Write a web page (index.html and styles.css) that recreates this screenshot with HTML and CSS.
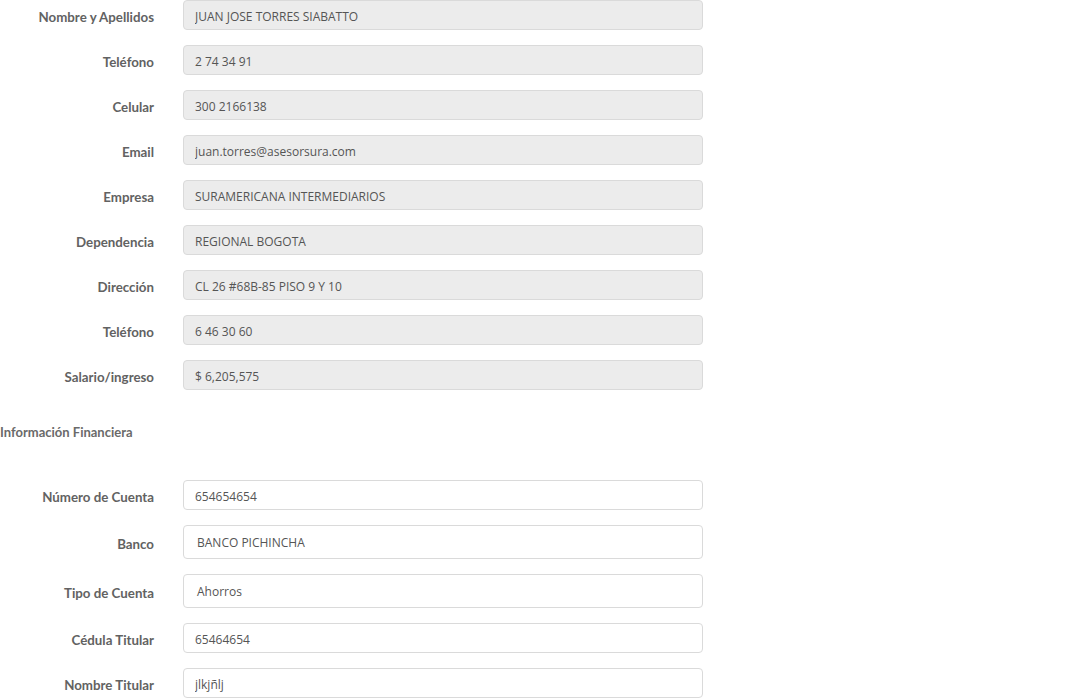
FILE: index.html
```html
<!DOCTYPE html>
<html lang="es">
<head>
<meta charset="utf-8">
<title>Formulario</title>
<link rel="stylesheet" href="styles.css">
</head>
<body>
<form class="form">
  <div class="row"><label class="lbl">Nombre y Apellidos</label><input class="field" disabled value="JUAN JOSE TORRES SIABATTO"></div>
  <div class="row"><label class="lbl">Teléfono</label><input class="field" disabled value="2 74 34 91"></div>
  <div class="row"><label class="lbl">Celular</label><input class="field" disabled value="300 2166138"></div>
  <div class="row"><label class="lbl">Email</label><input class="field" disabled value="juan.torres@asesorsura.com"></div>
  <div class="row"><label class="lbl">Empresa</label><input class="field" disabled value="SURAMERICANA INTERMEDIARIOS"></div>
  <div class="row"><label class="lbl">Dependencia</label><input class="field" disabled value="REGIONAL BOGOTA"></div>
  <div class="row"><label class="lbl">Dirección</label><input class="field" disabled value="CL 26 #68B-85 PISO 9 Y 10"></div>
  <div class="row"><label class="lbl">Teléfono</label><input class="field" disabled value="6 46 30 60"></div>
  <div class="row"><label class="lbl">Salario/ingreso</label><input class="field" disabled value="$ 6,205,575"></div>

  <h4 class="section">Información Financiera</h4>

  <div class="row"><label class="lbl">Número de Cuenta</label><input class="field" value="654654654"></div>
  <div class="row"><label class="lbl">Banco</label><div class="field select">BANCO PICHINCHA</div></div>
  <div class="row"><label class="lbl">Tipo de Cuenta</label><div class="field select">Ahorros</div></div>
  <div class="row"><label class="lbl">Cédula Titular</label><input class="field" value="65464654"></div>
  <div class="row"><label class="lbl">Nombre Titular</label><input class="field" value="jlkjñlj"></div>
</form>
</body>
</html>
```
FILE: styles.css
```css
html, body {
  margin: 0;
  padding: 0;
  background: #fff;
}
.form {
  display: flex;
  flex-direction: column;
}
.row {
  display: flex;
  align-items: center;
  margin-bottom: 15px;
}
.lbl {
  width: 154px;
  margin-right: 29px;
  padding-top: 3px;
  text-align: right;
  font-family: "Lato", "Open Sans", sans-serif;
  font-weight: 700;
  font-size: 13.3px;
  color: #626262;
}
.field {
  box-sizing: border-box;
  width: 520px;
  height: 30px;
  margin: 0;
  padding: 2px 11px 0;
  border: 1px solid #dadada;
  border-radius: 4px;
  background: #fff;
  font-family: "Open Sans", sans-serif;
  font-size: 12px;
  color: #555;
  outline: none;
}
.field:disabled {
  background: #ececec;
  color: #555;
  -webkit-text-fill-color: #555;
  opacity: 1;
}
.select {
  height: 34px;
  padding: 0 13px;
  display: flex;
  align-items: center;
}
.section {
  margin: 0;
  padding: 20px 0 40px;
  font-family: "Lato", "Open Sans", sans-serif;
  font-weight: 700;
  font-size: 13px;
  line-height: 15px;
  color: #6a6a6a;
}
```
